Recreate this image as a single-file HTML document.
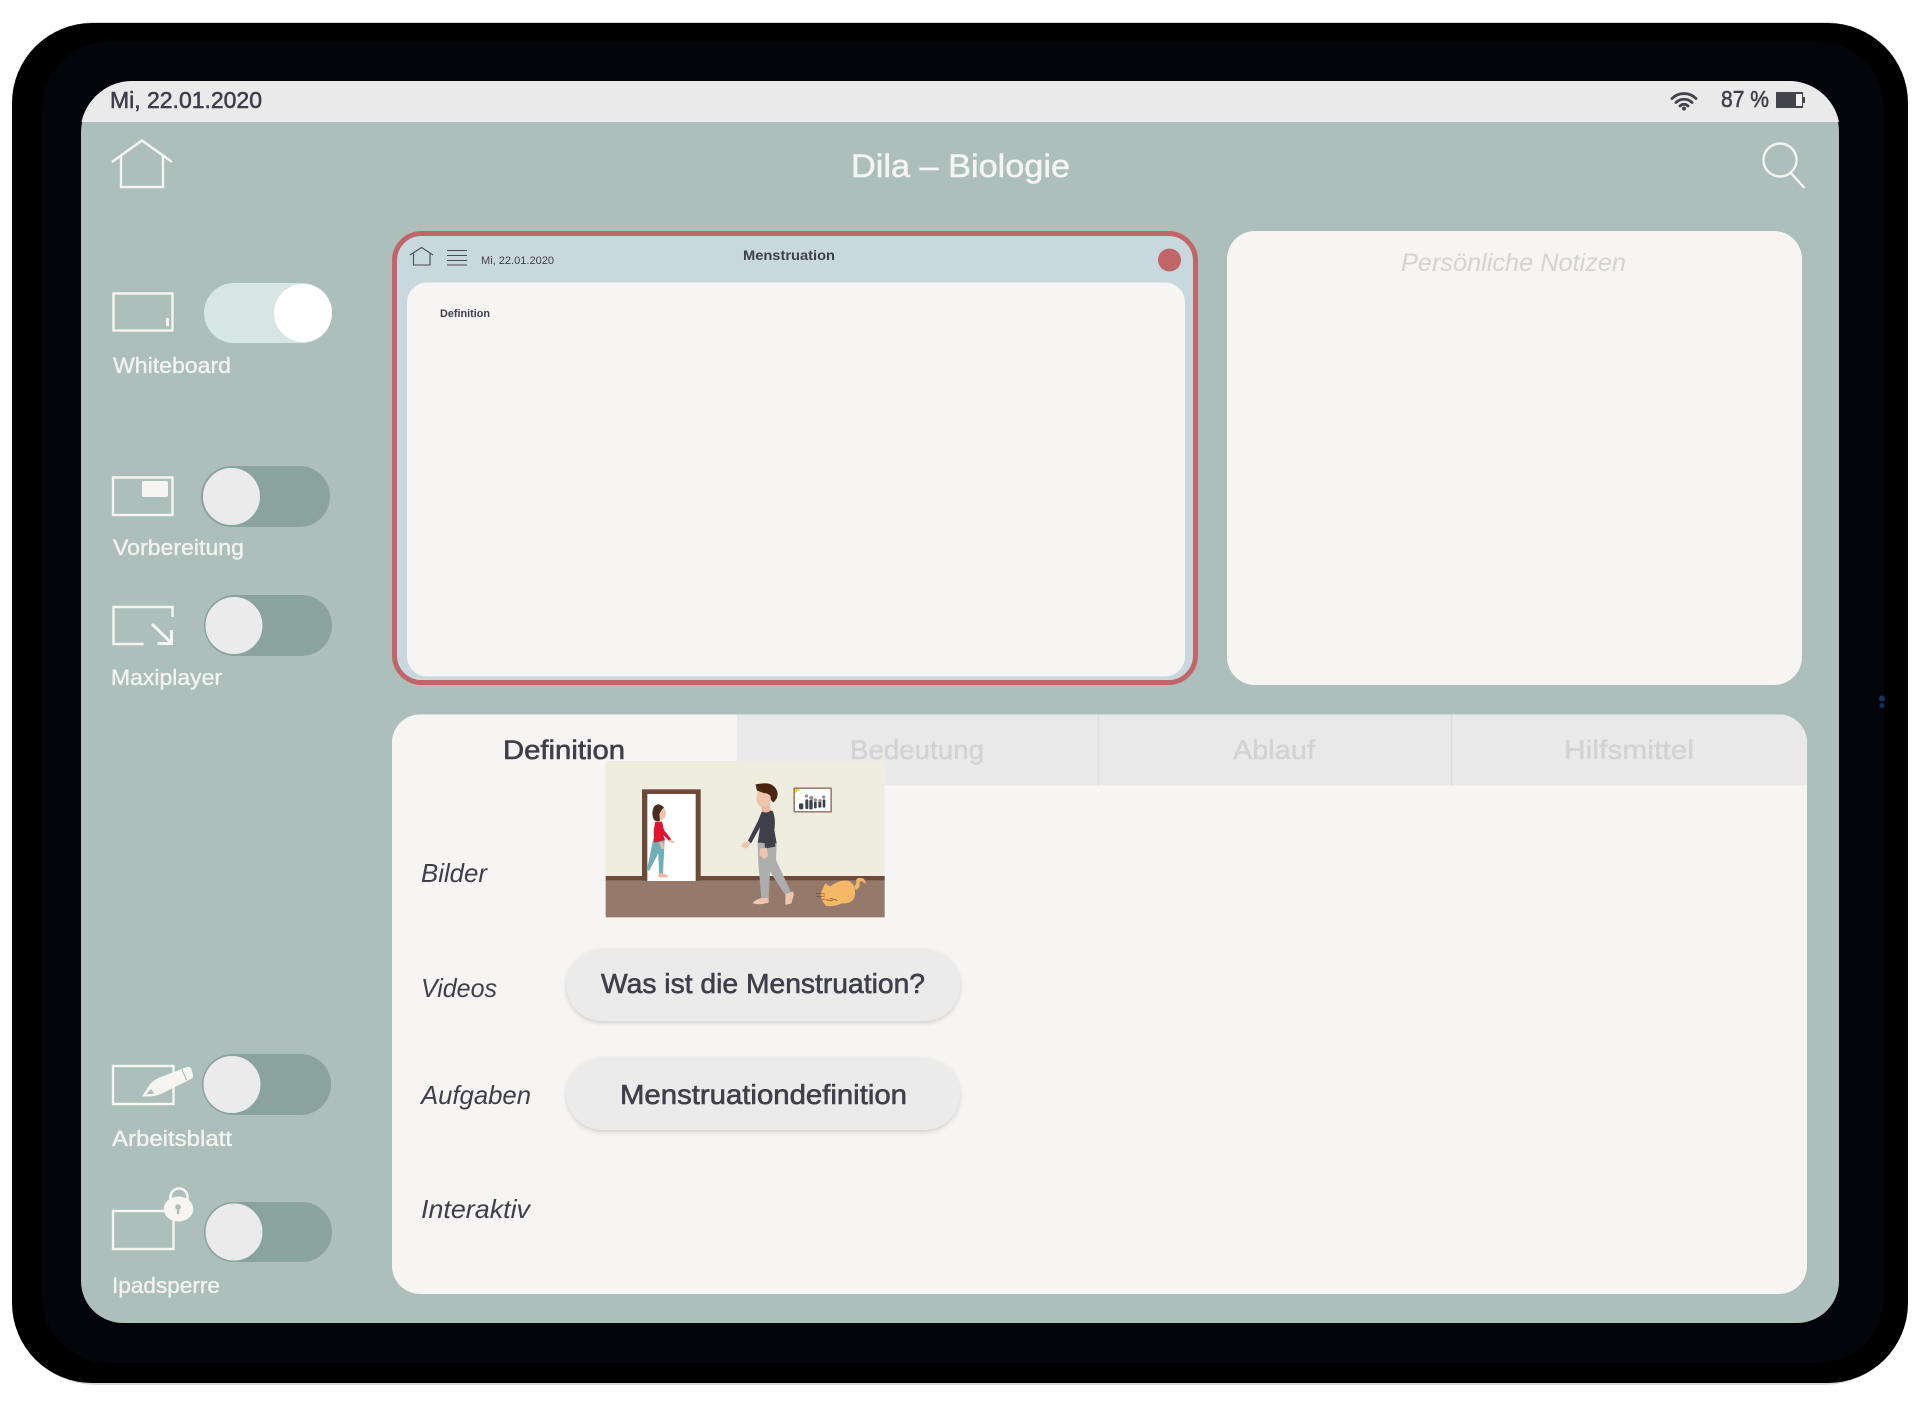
<!DOCTYPE html>
<html lang="de">
<head>
<meta charset="utf-8">
<title>Dila – Biologie</title>
<style>
html,body{margin:0;padding:0;background:#fff;width:1920px;height:1403px;overflow:hidden}
svg{display:block}
text{font-family:"Liberation Sans",sans-serif}
.lb{fill:#f3f3f0;font-size:22px;stroke:#f3f3f0;stroke-width:.35px}
.it{font-style:italic;fill:#3f3f4a;font-size:26px}
.tb{fill:#d3d3d3;font-size:27px;stroke:#d3d3d3;stroke-width:.45px}
.btn{fill:#3f3f4a;font-size:28px;stroke:#3f3f4a;stroke-width:.6px}
.ic{fill:none;stroke:#f6f5f2;stroke-width:2.400}
</style>
</head>
<body>
<svg xmlns="http://www.w3.org/2000/svg" width="1920" height="1403" viewBox="0 0 1920 1403">
<defs>
<filter id="s" x="-10%" y="-20%" width="120%" height="150%"><feDropShadow dx="0" dy="2" stdDeviation="2.500" flood-color="#000" flood-opacity=".16"/></filter>
</defs>
<rect width="1920" height="1403" fill="#fff"/>
<!-- device frame -->
<rect x="12.500" y="22" width="1895" height="1363" rx="84" fill="#8d8d8d" opacity=".35"/>
<rect x="12" y="23" width="1896" height="1360" rx="80" fill="#000"/>
<rect x="42" y="42" width="1842" height="1321" rx="66" fill="#03050a"/>
<circle cx="1882" cy="698.500" r="3" fill="#1d3f78" opacity=".8"/>
<circle cx="1882" cy="705.500" r="2.500" fill="#1d3f78" opacity=".7"/>
<!-- screen -->
<path d="M133 81H1788a51 51 0 0 1 51 51V1281a42 42 0 0 1-42 42H123a42 42 0 0 1-42-42V133a52 52 0 0 1 52-52Z" fill="#acbfba"/>
<path d="M133 81H1788a51 51 0 0 1 51 41H81.500a52 52 0 0 1 51.500-41Z" fill="#eaeaea"/>
<text x="110" y="108" font-size="23" fill="#3f3f4a" stroke="#3f3f4a" stroke-width=".55" textLength="152" lengthAdjust="spacingAndGlyphs">Mi, 22.01.2020</text>
<!-- wifi -->
<g fill="none" stroke="#43434c" stroke-width="2.800" stroke-linecap="round">
<path d="M1672 98.500a17 17 0 0 1 24 0"/>
<path d="M1676 102.500a11.500 11.500 0 0 1 16 0"/>
<path d="M1680 106a5.500 5.500 0 0 1 8 0"/>
</g>
<circle cx="1684" cy="108.500" r="2" fill="#43434c"/>
<text x="1721" y="107" font-size="23" fill="#3f3f4a" stroke="#3f3f4a" stroke-width=".55" textLength="48" lengthAdjust="spacingAndGlyphs">87 %</text>
<!-- battery -->
<rect x="1776" y="92" width="27" height="16" fill="#43434c"/>
<rect x="1796" y="94" width="6" height="12" fill="#f2f2f2"/>
<rect x="1803" y="97" width="2" height="6" fill="#43434c"/>
<!-- header -->
<path class="ic" d="M112 162 142 140.500 172 162M121 155V187H163V155"/>
<text x="851" y="177" font-size="32" fill="#f5f5f3" stroke="#f5f5f3" stroke-width=".5" textLength="219" lengthAdjust="spacingAndGlyphs">Dila – Biologie</text>
<circle class="ic" cx="1780" cy="160" r="16.500"/>
<path class="ic" d="M1790 172 1804.500 188"/>
<!-- whiteboard -->
<rect class="ic" x="113.500" y="293.500" width="59" height="37"/>
<rect x="166" y="318" width="3" height="8" fill="#f6f5f2"/>
<rect x="204" y="283" width="128" height="60" rx="30" fill="#d7e6e3"/>
<circle cx="303" cy="313" r="29" fill="#fff"/>
<text class="lb" x="113" y="373" textLength="118" lengthAdjust="spacingAndGlyphs">Whiteboard</text>
<!-- vorbereitung -->
<rect class="ic" x="113" y="477.500" width="59.500" height="37.500"/>
<rect x="142" y="481" width="26" height="16" rx="2" fill="#f6f5f3"/>
<rect x="201" y="466" width="129" height="61" rx="30.500" fill="#8aa39d"/>
<circle cx="231.500" cy="496.500" r="29" fill="#ebebeb" stroke="#8aa39d"/>
<text class="lb" x="113" y="555" textLength="131" lengthAdjust="spacingAndGlyphs">Vorbereitung</text>
<!-- maxiplayer -->
<path class="ic" d="M172.500 617V607H113.500V644H143.500"/>
<path d="M152 624 171 642.500M171.500 630V643.500H157.500" fill="none" stroke="#f6f5f2" stroke-width="3"/>
<rect x="204" y="595" width="128" height="61" rx="30.500" fill="#8aa39d"/>
<circle cx="234" cy="625.500" r="29" fill="#ebebeb" stroke="#8aa39d"/>
<text class="lb" x="111" y="685" textLength="111" lengthAdjust="spacingAndGlyphs">Maxiplayer</text>
<!-- arbeitsblatt -->
<rect class="ic" x="113" y="1066" width="60.500" height="38"/>
<path d="M142 1096.500 150 1084Q155 1079 161 1077L187 1067Q190 1066.500 191.500 1069L193 1075Q193.500 1077.500 191 1079L165 1092Q158 1096 150 1096.500Z" fill="#f6f5f2"/>
<path d="M182 1069.500 186.500 1080" stroke="#acbfba" stroke-width="1.200"/>
<path d="M146 1094.500 151 1089 154.500 1093.500Z" fill="#acbfba"/>
<rect x="202" y="1054" width="129" height="61" rx="30.500" fill="#8aa39d"/>
<circle cx="232" cy="1084.500" r="29" fill="#ebebeb" stroke="#8aa39d"/>
<text class="lb" x="112" y="1146" textLength="120" lengthAdjust="spacingAndGlyphs">Arbeitsblatt</text>
<!-- ipadsperre -->
<rect class="ic" x="113" y="1211" width="60.500" height="38"/>
<path d="M170.500 1204V1197a8.500 8.500 0 0 1 17 0V1204" fill="none" stroke="#f6f5f2" stroke-width="2.600"/>
<ellipse cx="178.500" cy="1209" rx="14.800" ry="12.500" fill="#f6f5f2"/>
<circle cx="178" cy="1207" r="2.800" fill="#acbfba"/>
<rect x="176.800" y="1207" width="2.500" height="7" fill="#acbfba"/>
<rect x="204" y="1202" width="128" height="60" rx="30" fill="#8aa39d"/>
<circle cx="234" cy="1232" r="29" fill="#ebebeb" stroke="#8aa39d"/>
<text class="lb" x="112" y="1293" textLength="108" lengthAdjust="spacingAndGlyphs">Ipadsperre</text>
<!-- whiteboard card -->
<rect x="394.500" y="233.500" width="801" height="449" rx="27" fill="#c9d8df" stroke="#c06668" stroke-width="5"/>
<rect x="407" y="282.500" width="778" height="394" rx="20" fill="#f6f5f3"/>
<path d="M410 255 421.500 247.500 433 255M413.500 253V265H430V253" fill="none" stroke="#4a4a53" stroke-width="1.100"/>
<path d="M447 250.500H467M447 255.500H467M447 260.500H467M447 265H467" stroke="#4a4a53" stroke-width="1"/>
<text x="481" y="264" font-size="11" fill="#3f3f4a" textLength="73" lengthAdjust="spacingAndGlyphs">Mi, 22.01.2020</text>
<text x="743" y="260" font-size="14" font-weight="700" fill="#3f3f4a" textLength="92" lengthAdjust="spacingAndGlyphs">Menstruation</text>
<circle cx="1169.500" cy="260" r="11.500" fill="#c06668"/>
<text x="440" y="317" font-size="11" font-weight="700" fill="#3f3f4a" textLength="50" lengthAdjust="spacingAndGlyphs">Definition</text>
<!-- notes -->
<rect x="1227" y="231" width="575" height="454" rx="28" fill="#f6f5f3"/>
<text x="1401" y="271" font-size="25" font-style="italic" fill="#d3d3d3" textLength="225" lengthAdjust="spacingAndGlyphs">Persönliche Notizen</text>
<!-- tab panel -->
<rect x="392" y="714.500" width="1415" height="579.500" rx="28" fill="#f6f5f3"/>
<path d="M737 714.500H1779a28 28 0 0 1 28 28V785.500H737Z" fill="#e9e9e9"/>
<path d="M1098.500 714.500V785.500M1451.500 714.500V785.500" stroke="#dcdcdc" stroke-width="1.500"/>
<text x="503" y="759" font-size="27" fill="#3f3f4a" stroke="#3f3f4a" stroke-width=".6" textLength="122" lengthAdjust="spacingAndGlyphs">Definition</text>
<text class="tb" x="850" y="759" textLength="134" lengthAdjust="spacingAndGlyphs">Bedeutung</text>
<text class="tb" x="1233" y="759" textLength="82" lengthAdjust="spacingAndGlyphs">Ablauf</text>
<text class="tb" x="1564" y="759" textLength="130" lengthAdjust="spacingAndGlyphs">Hilfsmittel</text>
<text class="it" x="421" y="882" textLength="66" lengthAdjust="spacingAndGlyphs">Bilder</text>
<text class="it" x="421" y="997" textLength="76" lengthAdjust="spacingAndGlyphs">Videos</text>
<text class="it" x="421" y="1104" textLength="110" lengthAdjust="spacingAndGlyphs">Aufgaben</text>
<text class="it" x="421" y="1218" textLength="109" lengthAdjust="spacingAndGlyphs">Interaktiv</text>
<!-- buttons -->
<rect x="566.500" y="949" width="393.500" height="72" rx="36" fill="#ebebeb" filter="url(#s)"/>
<text class="btn" x="601" y="993" textLength="324" lengthAdjust="spacingAndGlyphs">Was ist die Menstruation?</text>
<rect x="566.500" y="1058" width="393.500" height="72" rx="36" fill="#ebebeb" filter="url(#s)"/>
<text class="btn" x="620" y="1104" textLength="287" lengthAdjust="spacingAndGlyphs">Menstruationdefinition</text>
<!-- illustration -->
<g transform="translate(590 750) scale(.33333)">
<rect x="47" y="33" width="837" height="345" fill="#efece0"/>
<rect x="47" y="378" width="837" height="14" fill="#6b4a3a"/>
<rect x="47" y="391" width="837" height="111" fill="#957a6b"/>
<rect x="156" y="118" width="176" height="274" fill="#6b4a3a"/>
<rect x="172" y="132" width="145" height="261" fill="#fff"/>
<!-- girl -->
<path d="M190 265 176 335 170 360 178 362 205 310 207 370H219L224 270Z" fill="#6fb0b8"/>
<path d="M205 370H219L233 376V382H206Z" fill="#eeb9a2"/>
<path d="M172 362 176 380H171Z" fill="#eeb9a2"/>
<path d="M196 215H216L222 240 244 268 238 274 220 255 225 270 192 278 191 240Z" fill="#e0142e"/>
<path d="M238 268 254 276 250 280 236 274Z" fill="#eeb9a2"/>
<path d="M207 278 220 276 222 296 214 298Z" fill="#eeb9a2"/>
<ellipse cx="212" cy="190" rx="16" ry="20" fill="#f0c5ae"/>
<path d="M222 172Q205 155 192 170 182 190 192 210 202 216 210 212L208 192 216 178Z" fill="#4a2c20"/>
<!-- man -->
<path d="M503 278H560L558 330 604 428 585 434 540 365 536 445 514 445 505 340Z" fill="#adadad"/>
<path d="M514 444H536V458Q510 466 488 460 490 452 514 444Z" fill="#f0c5ae"/>
<path d="M586 434 608 424 612 432 604 460 586 465Z" fill="#f0c5ae"/>
<path d="M515 186Q530 176 548 183 558 205 553 240L560 280 503 278 510 232 483 280 474 272 503 215Z" fill="#3e3f49"/>
<path d="M543 195 556 290 525 296 520 240Z" fill="#3e3f49"/>
<path d="M474 274 482 282 468 296 452 290 458 280Z" fill="#f0c5ae"/>
<path d="M510 295 530 293 534 318 522 327 508 315Z" fill="#f0c5ae"/>
<path d="M512 160H538L542 182Q530 192 515 184Z" fill="#eeb9a2"/>
<path d="M503 125H540L546 150 530 168Q512 176 506 165L498 150Z" fill="#f0c5ae"/>
<path d="M497 106 503 115 496 103 520 100Q552 98 562 125 566 145 550 157 540 150 542 138 530 128 525 130 508 125 501 122Z" fill="#4a2612"/>
<!-- picture -->
<rect x="610" y="112" width="116" height="76" rx="4" fill="#a08070"/>
<rect x="615" y="117" width="106" height="66" fill="#fff"/>
<path d="M615 117H631L615 131Z" fill="#f4d428"/>
<path d="M628 135 640 128M620 140 626 150" stroke="#f4e070" stroke-width="2"/>
<g fill="#3e3f49">
<rect x="627" y="160" width="13" height="18" rx="5"/>
<rect x="646" y="148" width="9" height="29" rx="3"/>
<rect x="658" y="150" width="10" height="28" rx="3"/>
<rect x="672" y="155" width="8" height="20" rx="3"/>
<rect x="685" y="155" width="9" height="18" rx="3"/>
<rect x="698" y="148" width="8" height="25" rx="3"/>
</g>
<g fill="#8d8d92">
<circle cx="649" cy="138" r="5"/><circle cx="664" cy="144" r="6"/><circle cx="676" cy="150" r="5"/><circle cx="690" cy="152" r="5"/><circle cx="701" cy="141" r="5"/>
</g>
<!-- cat -->
<path d="M793 410Q803 398 798 390 806 380 820 386 828 392 826 403L820 396Q812 390 808 398 812 412 798 420Z" fill="#f5b866"/>
<path d="M720 410Q745 388 775 392 800 402 794 440 788 462 755 460 735 470 708 468 692 450 692 430L706 400Z" fill="#f5b866"/>
<path d="M697 448 728 452M705 432 678 430M705 438 680 440M720 445 742 451" stroke="#5a4030" stroke-width="1.800" fill="none"/>
<path d="M698 443 720 460" stroke="#e8a650" stroke-width="2"/>
</g>
</svg>
</body>
</html>
